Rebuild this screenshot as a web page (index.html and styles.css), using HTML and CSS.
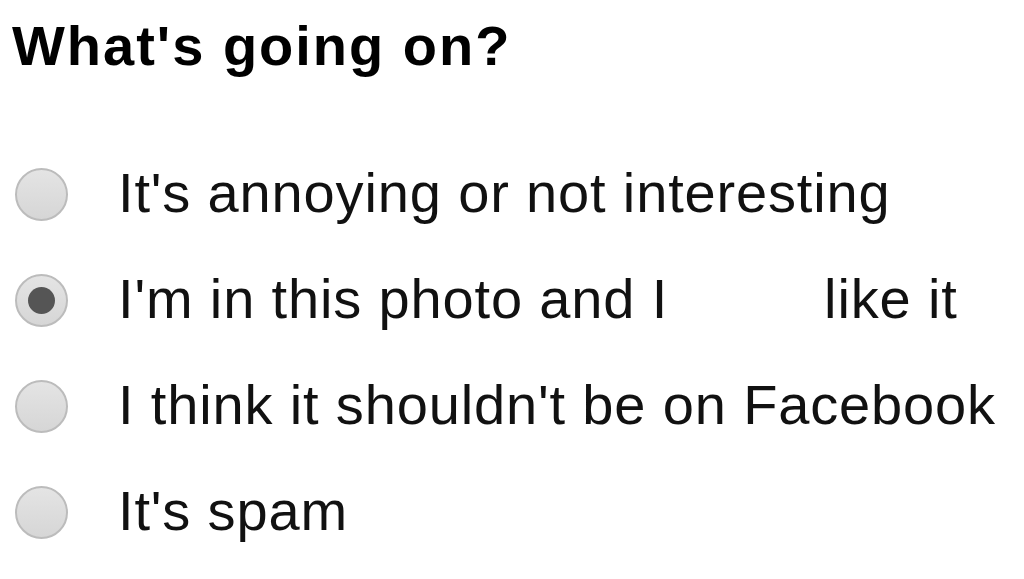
FILE: index.html
```html
<!DOCTYPE html>
<html>
<head>
<meta charset="utf-8">
<link rel="stylesheet" href="styles.css">
</head>
<body>
<div class="page">
  <h1 class="title">What's going on?</h1>
  <div class="options">
    <div class="option"><span class="radio"></span><span class="label">It's annoying or not interesting</span></div>
    <div class="option"><span class="radio checked"></span><span class="label">I'm in this photo and I<span class="blank"></span>like it</span></div>
    <div class="option"><span class="radio"></span><span class="label">I think it shouldn't be on Facebook</span></div>
    <div class="option"><span class="radio"></span><span class="label">It's spam</span></div>
  </div>
</div>
</body>
</html>
```

FILE: styles.css
```css
html, body {
  margin: 0;
  padding: 0;
  background: #fff;
}
.page {
  width: 1024px;
  height: 579px;
  overflow: hidden;
  font-family: "Liberation Sans", Arial, sans-serif;
  color: #111;
}
.title {
  margin: 0;
  padding: 14px 0 0 12px;
  font-size: 56px;
  line-height: 64px;
  letter-spacing: 2px;
  font-weight: bold;
  color: #000;
}
.options {
  display: flex;
  flex-direction: column;
  padding: 83px 0 0 15px;
  gap: 42px;
}
.option {
  display: flex;
  align-items: flex-start;
  height: 64px;
}
.radio {
  flex: none;
  width: 49px;
  height: 49px;
  margin-top: 7px;
  border: 2px solid #bcbcbc;
  border-radius: 50%;
  background: linear-gradient(#e4e4e4, #d6d6d6);
  position: relative;
  margin-right: 50px;
}
.radio.checked::after {
  content: "";
  position: absolute;
  left: 11px;
  top: 11px;
  width: 27px;
  height: 27px;
  border-radius: 50%;
  background: #555;
}
.label {
  font-size: 56px;
  line-height: 64px;
  letter-spacing: 0.85px;
  white-space: nowrap;
}
.blank {
  display: inline-block;
  width: 156px;
}
```
